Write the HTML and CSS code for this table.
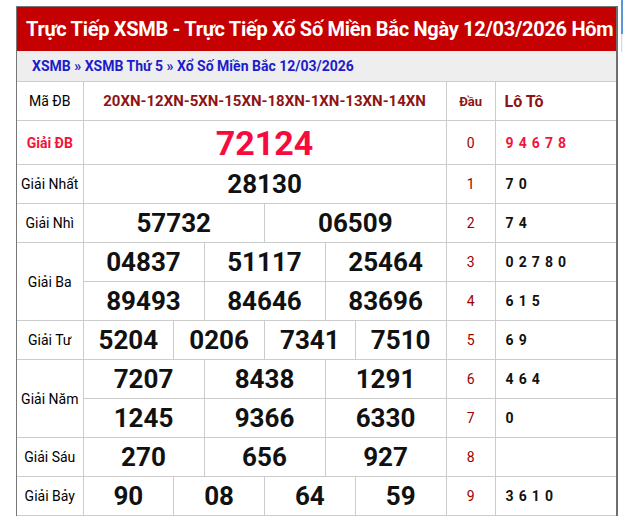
FILE: index.html
```html
<!DOCTYPE html>
<html lang="vi">
<head>
<meta charset="utf-8">
<title>XSMB</title>
<link rel="stylesheet" href="styles.css">
</head>
<body>
<div class="page">
  <div class="box">
    <h1 class="title">Trực Tiếp XSMB - Trực Tiếp Xổ Số Miền Bắc Ngày 12/03/2026 Hôm</h1>
    <div class="crumb"><a href="#">XSMB</a> » <a href="#">XSMB Thứ 5</a> » <a href="#">Xổ Số Miền Bắc 12/03/2026</a></div>
    <table class="kq">
      <colgroup>
        <col class="c-label">
        <col class="c-num"><col class="c-num"><col class="c-num"><col class="c-num">
        <col class="c-num"><col class="c-num"><col class="c-num"><col class="c-num">
        <col class="c-num"><col class="c-num"><col class="c-num"><col class="c-num">
        <col class="c-dau">
        <col class="c-loto">
      </colgroup>
      <tr class="r-head">
        <td class="label">Mã ĐB</td>
        <td colspan="12" class="madb">20XN-12XN-5XN-15XN-18XN-1XN-13XN-14XN</td>
        <td class="dau-h">Đầu</td>
        <td class="loto-h">Lô Tô</td>
      </tr>
      <tr class="r-db">
        <td class="label label-db">Giải ĐB</td>
        <td colspan="12" class="num num-db">72124</td>
        <td class="dau">0</td>
        <td class="loto loto-db">9 4 6 7 8</td>
      </tr>
      <tr>
        <td class="label">Giải Nhất</td>
        <td colspan="12" class="num">28130</td>
        <td class="dau">1</td>
        <td class="loto">7 0</td>
      </tr>
      <tr>
        <td class="label">Giải Nhì</td>
        <td colspan="6" class="num">57732</td>
        <td colspan="6" class="num">06509</td>
        <td class="dau">2</td>
        <td class="loto">7 4</td>
      </tr>
      <tr>
        <td class="label" rowspan="2">Giải Ba</td>
        <td colspan="4" class="num">04837</td>
        <td colspan="4" class="num">51117</td>
        <td colspan="4" class="num">25464</td>
        <td class="dau">3</td>
        <td class="loto">0 2 7 8 0</td>
      </tr>
      <tr>
        <td colspan="4" class="num">89493</td>
        <td colspan="4" class="num">84646</td>
        <td colspan="4" class="num">83696</td>
        <td class="dau">4</td>
        <td class="loto">6 1 5</td>
      </tr>
      <tr>
        <td class="label">Giải Tư</td>
        <td colspan="3" class="num">5204</td>
        <td colspan="3" class="num">0206</td>
        <td colspan="3" class="num">7341</td>
        <td colspan="3" class="num">7510</td>
        <td class="dau">5</td>
        <td class="loto">6 9</td>
      </tr>
      <tr>
        <td class="label" rowspan="2">Giải Năm</td>
        <td colspan="4" class="num">7207</td>
        <td colspan="4" class="num">8438</td>
        <td colspan="4" class="num">1291</td>
        <td class="dau">6</td>
        <td class="loto">4 6 4</td>
      </tr>
      <tr>
        <td colspan="4" class="num">1245</td>
        <td colspan="4" class="num">9366</td>
        <td colspan="4" class="num">6330</td>
        <td class="dau">7</td>
        <td class="loto">0</td>
      </tr>
      <tr>
        <td class="label">Giải Sáu</td>
        <td colspan="4" class="num">270</td>
        <td colspan="4" class="num">656</td>
        <td colspan="4" class="num">927</td>
        <td class="dau">8</td>
        <td class="loto"></td>
      </tr>
      <tr>
        <td class="label">Giải Bảy</td>
        <td colspan="3" class="num">90</td>
        <td colspan="3" class="num">08</td>
        <td colspan="3" class="num">64</td>
        <td colspan="3" class="num">59</td>
        <td class="dau">9</td>
        <td class="loto">3 6 1 0</td>
      </tr>
    </table>
  </div>
  <div class="side-peek"><div class="side-peek-top"></div></div>
</div>
</body>
</html>
```

FILE: styles.css
```css
* { box-sizing: border-box; }
html, body { margin: 0; padding: 0; background: #fff; }
body { font-family: Roboto, "Noto Sans", Arial, sans-serif; color: #000; }

.page {
  position: relative;
  width: 623px;
  height: 520px;
  padding: 6px 0 0 16px;
  overflow: hidden;
}

.box {
  width: 602px;
  border-top: 1px solid #777;
  border-left: 1px solid #777;
  border-right: 2px solid #6e6e6e;
}

.title {
  margin: 0;
  height: 44px;
  background: #c40000;
  color: #fff;
  font-size: 20px;
  font-weight: 700;
  line-height: 44px;
  padding-left: 9px;
  white-space: nowrap;
  overflow: hidden;
  letter-spacing: -0.3px;
}

.crumb {
  height: 30px;
  line-height: 30px;
  background: #eeeeee;
  padding-left: 15px;
  font-size: 14px;
  font-weight: 700;
  color: #1c1ccc;
  white-space: nowrap;
  overflow: hidden;
}
.crumb a { color: #1c1ccc; text-decoration: none; }

.kq {
  width: 599px;
  table-layout: fixed;
  border-collapse: collapse;
}
.c-label { width: 66px; }
.c-num { width: 30.25px; }
.c-dau { width: 49px; }
.c-loto { width: 121px; }

.kq td {
  border: 1px solid #cccccc;
  padding: 0;
  height: 39px;
  text-align: center;
  vertical-align: middle;
  white-space: nowrap;
}
.kq tr > td:first-child.label { border-left: none; }
.kq td.loto, .kq td.loto-h { border-right: none; }

.r-head td { height: 39px; }
.r-db td { height: 44px; }

.label { font-size: 14px; }
.label-db { color: #f0143c; font-weight: 700; }

.madb {
  color: #8e1414;
  font-size: 15px;
  font-weight: 700;
}
.dau-h { color: #8e1414; font-size: 13px; font-weight: 700; }
.kq td.loto-h {
  color: #8e1414;
  font-size: 16px;
  font-weight: 700;
  text-align: left;
  padding-left: 9px;
}

.num {
  font-size: 26px;
  font-weight: 700;
  color: #111;
}
.kq td.num-db {
  font-size: 34px;
  color: #f70a3c;
}

.dau { color: #a00000; font-size: 14px; }
.kq td.loto {
  text-align: left;
  padding-left: 10px;
  font-size: 14px;
  font-weight: 700;
  letter-spacing: 0.8px;
  color: #111;
}
.kq td.loto-db { color: #f0143c; }

.side-peek {
  position: absolute;
  left: 621px;
  top: 0;
  width: 10px;
  height: 52px;
  background: #eef4fc;
  border-left: 1px solid #c9dcf3;
}
.side-peek-top {
  height: 34px;
  margin-left: -1px;
  border-left: 2px solid #5a94dc;
}
```
